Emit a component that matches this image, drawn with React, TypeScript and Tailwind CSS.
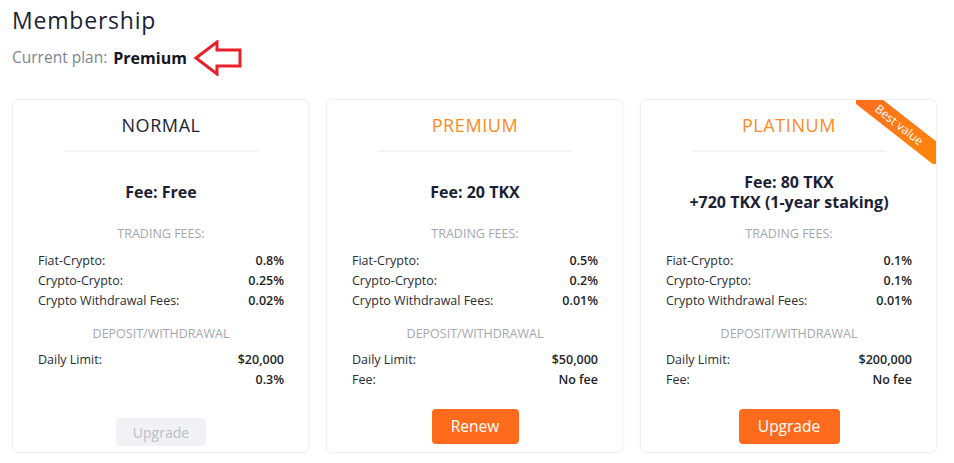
type Row = { label: string; value: string };

type Plan = {
  name: string;
  highlight: boolean;
  fee: string[];
  trading: Row[];
  deposit: Row[];
  button: string;
  disabled?: boolean;
  ribbon?: boolean;
};

const plans: Plan[] = [
  {
    name: 'NORMAL',
    highlight: false,
    fee: ['Fee: Free'],
    trading: [
      { label: 'Fiat-Crypto:', value: '0.8%' },
      { label: 'Crypto-Crypto:', value: '0.25%' },
      { label: 'Crypto Withdrawal Fees:', value: '0.02%' },
    ],
    deposit: [
      { label: 'Daily Limit:', value: '$20,000' },
      { label: '', value: '0.3%' },
    ],
    button: 'Upgrade',
    disabled: true,
  },
  {
    name: 'PREMIUM',
    highlight: true,
    fee: ['Fee: 20 TKX'],
    trading: [
      { label: 'Fiat-Crypto:', value: '0.5%' },
      { label: 'Crypto-Crypto:', value: '0.2%' },
      { label: 'Crypto Withdrawal Fees:', value: '0.01%' },
    ],
    deposit: [
      { label: 'Daily Limit:', value: '$50,000' },
      { label: 'Fee:', value: 'No fee' },
    ],
    button: 'Renew',
  },
  {
    name: 'PLATINUM',
    highlight: true,
    fee: ['Fee: 80 TKX', '+720 TKX (1-year staking)'],
    trading: [
      { label: 'Fiat-Crypto:', value: '0.1%' },
      { label: 'Crypto-Crypto:', value: '0.1%' },
      { label: 'Crypto Withdrawal Fees:', value: '0.01%' },
    ],
    deposit: [
      { label: 'Daily Limit:', value: '$200,000' },
      { label: 'Fee:', value: 'No fee' },
    ],
    button: 'Upgrade',
    ribbon: true,
  },
];

function Rows({ rows }: { rows: Row[] }) {
  return (
    <div className="flex flex-col">
      {rows.map((r, i) => (
        <div key={i} className="flex justify-between h-[20px] items-center text-[12.5px] text-[#2a2d34]">
          <span>{r.label}</span>
          <span className="font-semibold text-[#1c1f26]">{r.value}</span>
        </div>
      ))}
    </div>
  );
}

function PlanCard({ plan }: { plan: Plan }) {
  return (
    <div className="relative w-[297px] h-[354px] flex flex-col rounded-md border border-[#f1f1f3] bg-white shadow-[0_0_5px_rgba(0,0,0,0.03)] pl-[25px] pr-[24px]">
      {plan.ribbon && (
        <div className="absolute top-0 right-0 w-[80px] h-[64px] overflow-hidden rounded-tr-md">
          <div className="absolute left-[-22px] top-[15px] w-[130px] h-[20px] rotate-[38deg] bg-gradient-to-r from-[#ff6a1f] to-[#ff8a00] text-white text-[12px] leading-[20px] text-center">
            Best value
          </div>
        </div>
      )}
      <div
        className={
          'mt-[13px] h-[24px] leading-[24px] text-center text-[18px] font-medium tracking-[0.6px] ' +
          (plan.highlight ? 'text-[#ff8a1c]' : 'text-[#1a1f36]')
        }
      >
        {plan.name}
      </div>
      <div className="mt-[13px] mx-auto w-[194px] h-[2px] bg-[#f3f3f5]" />
      <div className="mt-[10px] h-[60px] flex flex-col items-center justify-center text-[16px] font-bold text-[#1a1f36] leading-[20px]">
        {plan.fee.map((f) => (
          <div key={f}>{f}</div>
        ))}
      </div>
      <div className="mt-[4px] h-[16px] leading-[16px] text-center text-[12.5px] text-[#a3a7b0] uppercase">
        Trading fees:
      </div>
      <div className="mt-[9px]">
        <Rows rows={plan.trading} />
      </div>
      <div className="mt-[15px] h-[16px] leading-[16px] text-center text-[12.5px] text-[#a3a7b0] uppercase">
        Deposit/Withdrawal
      </div>
      <div className="mt-[8px]">
        <Rows rows={plan.deposit} />
      </div>
      {plan.disabled ? (
        <button className="mt-[28px] mx-auto w-[90px] h-[28px] rounded bg-[#f1f2f5] text-[#b9bdc6] text-[14px]">
          {plan.button}
        </button>
      ) : (
        <button
          className={
            'mt-[19px] mx-auto h-[35px] rounded bg-[#ff6b1c] text-white text-[15.5px] ' +
            (plan.button === 'Renew' ? 'w-[87px]' : 'w-[101px]')
          }
        >
          {plan.button}
        </button>
      )}
    </div>
  );
}

export default function App() {
  return (
    <div className="w-[954px] h-[463px] bg-white font-['Open_Sans',sans-serif] pl-[12px] overflow-hidden">
      <h1 className="pt-[5px] text-[23px] leading-[30px] font-medium text-[#1a1f36] tracking-[0.8px]">Membership</h1>
      <div className="mt-[11px] flex items-center h-[24px]">
        <span className="text-[15.5px] text-[#7d8391]">Current plan:</span>
        <span className="ml-[6px] text-[16px] font-bold text-[#12151f]">Premium</span>
        <svg width="50" height="36" viewBox="0 0 50 36" className="ml-[6px]">
          <polygon
            points="3,18 24,2 24,10 47,10 47,26 24,26 24,34"
            fill="none"
            stroke="#e8202a"
            strokeWidth="3"
          />
        </svg>
      </div>
      <div className="mt-[29px] flex gap-[17px]">
        {plans.map((p) => (
          <PlanCard key={p.name} plan={p} />
        ))}
      </div>
    </div>
  );
}
